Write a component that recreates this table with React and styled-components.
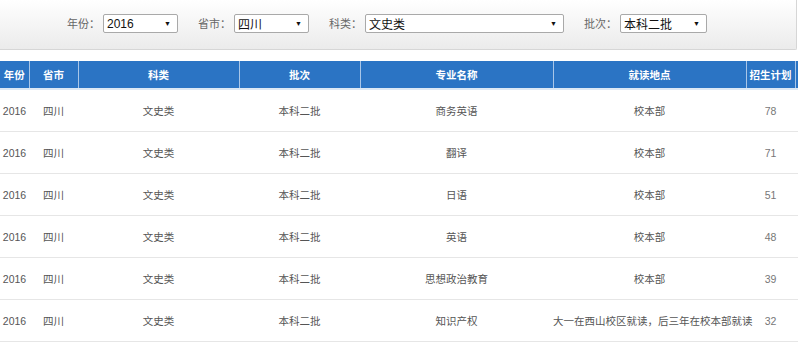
import styled, { createGlobalStyle } from "styled-components";

const GlobalStyle = createGlobalStyle`
  body {
    margin: 0;
    background: #fff;
    font-family: "Liberation Sans", "Noto Sans CJK SC", sans-serif;
  }
`;

const columns = [
  { key: "year", title: "年份", width: 29 },
  { key: "province", title: "省市", width: 49 },
  { key: "category", title: "科类", width: 161 },
  { key: "batch", title: "批次", width: 121 },
  { key: "major", title: "专业名称", width: 193 },
  { key: "place", title: "就读地点", width: 193 },
  { key: "plan", title: "招生计划", width: 49 },
  { key: "extra", title: "", width: 60 },
];

const rows = [
  { major: "商务英语", place: "校本部", plan: 78 },
  { major: "翻译", place: "校本部", plan: 71 },
  { major: "日语", place: "校本部", plan: 51 },
  { major: "英语", place: "校本部", plan: 48 },
  { major: "思想政治教育", place: "校本部", plan: 39 },
  { major: "知识产权", place: "大一在西山校区就读，后三年在校本部就读", plan: 32 },
];

const filters = [
  { label: "年份：", value: "2016", width: 75 },
  { label: "省市：", value: "四川", width: 75 },
  { label: "科类：", value: "文史类", width: 199 },
  { label: "批次：", value: "本科二批", width: 87 },
];

const FilterSection = () => {
  return (
    <FilterBar>
      {filters.map((f) => (
        <FilterItem key={f.label}>
          <FilterLabel>{f.label}</FilterLabel>
          <FakeSelect $width={f.width}>
            <span>{f.value}</span>
            <Arrow>▼</Arrow>
          </FakeSelect>
        </FilterItem>
      ))}
    </FilterBar>
  );
};

const App = () => {
  return (
    <Page>
      <GlobalStyle />
      <FilterSection />
      <TableWrap>
        <Table>
          <colgroup>
            {columns.map((c) => (
              <col key={c.key} style={{ width: c.width }} />
            ))}
          </colgroup>
          <thead>
            <tr>
              {columns.map((c) => (
                <HeadCell key={c.key}>{c.title}</HeadCell>
              ))}
            </tr>
          </thead>
          <tbody>
            {rows.map((r, i) => (
              <Row key={i}>
                <Cell>2016</Cell>
                <Cell>四川</Cell>
                <Cell>文史类</Cell>
                <Cell>本科二批</Cell>
                <Cell>{r.major}</Cell>
                <Cell>{r.place}</Cell>
                <Cell $num>{r.plan}</Cell>
                <Cell />
              </Row>
            ))}
          </tbody>
        </Table>
      </TableWrap>
    </Page>
  );
};

const Page = styled.div`
  width: 800px;
  height: 342px;
  overflow: hidden;
`;

const FilterBar = styled.div`
  box-sizing: border-box;
  width: 797px;
  height: 50px;
  padding: 14px 0 0 67px;
  display: flex;
  align-items: flex-start;
  gap: 20px;
  background: linear-gradient(#ffffff, #ebebeb);
  border-right: 1px solid #d6d6d6;
  border-bottom: 1px solid #d6d6d6;
  border-bottom-right-radius: 2px;
`;

const FilterItem = styled.div`
  display: flex;
  align-items: center;
`;

const FilterLabel = styled.span`
  font-family: "Noto Sans CJK SC", sans-serif;
  font-size: 11px;
  color: #666;
  margin-right: 3px;
  line-height: 19px;
`;

const FakeSelect = styled.div`
  box-sizing: border-box;
  width: ${({ $width }) => $width}px;
  height: 19px;
  padding: 0 6px 0 3px;
  display: flex;
  align-items: center;
  justify-content: space-between;
  background: #fff;
  border: 1px solid #a9a9a9;
  border-radius: 2px;
  font-family: "Liberation Sans", "Noto Sans CJK SC", sans-serif;
  font-size: 12px;
  color: #111;
`;

const Arrow = styled.span`
  font-size: 7px;
  color: #111;
`;

const TableWrap = styled.div`
  width: 798px;
  overflow: hidden;
  margin-top: 11px;
`;

const Table = styled.table`
  table-layout: fixed;
  border-collapse: collapse;
  width: 855px;
  font-family: "Liberation Sans", "Noto Sans CJK SC", sans-serif;
`;

const HeadCell = styled.th`
  height: 27px;
  padding: 0;
  background: #2b74c4;
  color: #fff;
  font-family: "Noto Sans CJK SC", sans-serif;
  font-size: 10.5px;
  font-weight: 700;
  text-align: center;
  border-left: 1px solid #a9c6e8;
  border-bottom: 2px solid #dce8f5;
  &:first-child {
    border-left: none;
  }
`;

const Row = styled.tr`
  border-bottom: 1px solid #e6e6e6;
`;

const Cell = styled.td`
  height: 41px;
  padding: 0;
  text-align: center;
  color: ${({ $num }) => ($num ? "#777" : "#555")};
  font-size: 10.5px;
  white-space: nowrap;
`;

export default App;
